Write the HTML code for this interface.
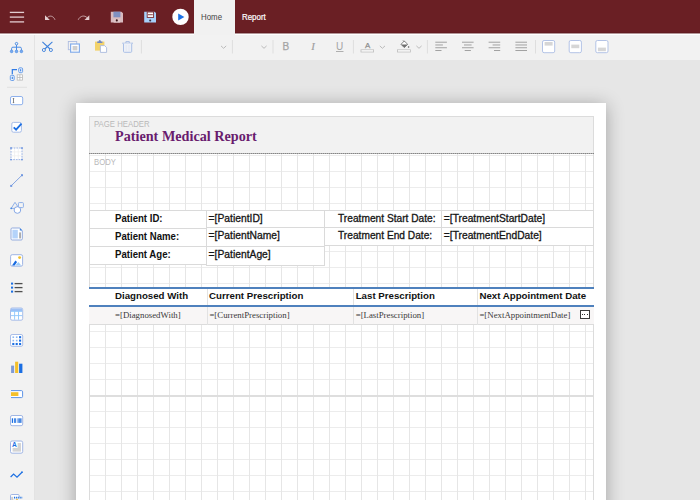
<!DOCTYPE html>
<html><head><meta charset="utf-8"><title>Report Designer</title>
<style>
*{box-sizing:border-box;margin:0;padding:0}
html,body{width:700px;height:500px;overflow:hidden;background:#e6e6e6;font-family:"Liberation Sans",sans-serif}
.abs{position:absolute}
#top{position:absolute;left:0;top:0;width:700px;height:34px;background:linear-gradient(to bottom,#6a1f24 0,#6a1f24 32px,#621b20 32px,#621b20 33px,#b39597 33px,#b39597 34px)}
#tabhome{position:absolute;left:194px;top:0;width:41px;height:35px;background:#f1f1f1;z-index:2}
#tool{position:absolute;left:0;top:34px;width:700px;height:26px;background:#f2f2f2;border-top:1px solid #fff}
#side{position:absolute;left:0;top:35px;width:35px;height:465px;background:#f2f2f2;border-right:1px solid #e3e3e3}
#page{position:absolute;left:76px;top:103px;width:530px;height:420px;background:#fff;box-shadow:0 2px 17px rgba(0,0,0,.3)}
#hdr{position:absolute;left:89px;top:116px;width:505px;height:38px;background:#f2f2f2;border:1px solid #dcdcdc;border-bottom:0}
#dash{position:absolute;left:89px;top:153px;width:505px;height:1px;background:repeating-linear-gradient(to right,#858585 0,#858585 1px,#b4b4b4 1px,#b4b4b4 2px)}
#body{position:absolute;left:89px;top:154px;width:505px;height:360px;border-left:1px solid #dcdcdc;border-right:1px solid #dcdcdc;
background-image:linear-gradient(to right,#e6e6e6 1px,transparent 1px),linear-gradient(to bottom,#ececec 1px,transparent 1px);background-size:16px 16px;background-position:15px 1px}
.tb{position:absolute;background:#fff;border:1px solid #dadada}
.t{position:absolute;line-height:1;white-space:nowrap}
.k{-webkit-text-stroke:0.3px #222}
svg{position:absolute;overflow:visible}

</style></head><body>
<div id="top"></div>
<div id="tabhome"></div>
<div id="tool"></div>
<div id="side"></div>
<div id="page"></div>
<div id="hdr"></div>
<div id="body"></div>
<div id="dash"></div>
<div class="t" style="left:201px;top:13px;font-size:9px;color:#444;transform-origin:0 0;transform:scaleX(0.875);z-index:3;">Home</div>
<div class="t" style="left:242.2px;top:13px;font-size:9px;color:#fff;transform-origin:0 0;transform:scaleX(0.88);-webkit-text-stroke:0.2px #fff;">Report</div>
<div class="t" style="left:94.4px;top:119px;font-size:9.4px;color:#b9b9b9;transform-origin:0 0;transform:scaleX(0.83);">PAGE HEADER</div>
<div class="t" style="left:94.4px;top:158px;font-size:9.2px;color:#b9b9b9;transform-origin:0 0;transform:scaleX(0.84);">BODY</div>
<div class="t" style="left:115px;top:129px;font-size:14.2px;color:#691c6e;font-weight:bold;font-family:'Liberation Serif',serif;">Patient Medical Report</div>
<div class="tb" style="left:89px;top:210px;width:118.0px;height:19.0px;"></div>
<div class="tb" style="left:89px;top:228px;width:118.0px;height:19.0px;"></div>
<div class="tb" style="left:89px;top:246px;width:118.0px;height:19.0px;"></div>
<div class="tb" style="left:206px;top:210px;width:119.0px;height:18.0px;"></div>
<div class="tb" style="left:206px;top:227px;width:119.0px;height:20.0px;"></div>
<div class="tb" style="left:206px;top:246px;width:119.0px;height:20.0px;"></div>
<div class="tb" style="left:324px;top:210px;width:118.0px;height:18.0px;"></div>
<div class="tb" style="left:324px;top:227px;width:118.0px;height:19.0px;"></div>
<div class="tb" style="left:441px;top:210px;width:153.0px;height:18.0px;"></div>
<div class="tb" style="left:441px;top:227px;width:153.0px;height:19.0px;"></div>
<div class="t" style="left:115px;top:214px;font-size:10.4px;color:#111;font-weight:bold;transform-origin:0 0;transform:scaleX(0.925);">Patient ID:</div>
<div class="t" style="left:115px;top:232px;font-size:10.4px;color:#111;font-weight:bold;transform-origin:0 0;transform:scaleX(0.925);">Patient Name:</div>
<div class="t" style="left:115px;top:250px;font-size:10.4px;color:#111;font-weight:bold;transform-origin:0 0;transform:scaleX(0.925);">Patient Age:</div>
<div class="t" style="left:208.6px;top:214px;font-size:10.3px;color:#111;-webkit-text-stroke:0.3px #1a1a1a;">=[PatientID]</div>
<div class="t" style="left:208.6px;top:231px;font-size:10.3px;color:#111;-webkit-text-stroke:0.3px #1a1a1a;">=[PatientName]</div>
<div class="t" style="left:208.6px;top:250px;font-size:10.3px;color:#111;-webkit-text-stroke:0.3px #1a1a1a;">=[PatientAge]</div>
<div class="t" style="left:338px;top:214px;font-size:10.2px;color:#111;-webkit-text-stroke:0.3px #1a1a1a;">Treatment Start Date:</div>
<div class="t" style="left:338px;top:231px;font-size:10.2px;color:#111;-webkit-text-stroke:0.3px #1a1a1a;">Treatment End Date:</div>
<div class="t" style="left:443.8px;top:214px;font-size:10.25px;color:#111;-webkit-text-stroke:0.3px #1a1a1a;">=[TreatmentStartDate]</div>
<div class="t" style="left:443.8px;top:231px;font-size:10.25px;color:#111;-webkit-text-stroke:0.3px #1a1a1a;">=[TreatmentEndDate]</div>
<div class="abs" style="left:89px;top:287px;width:505px;height:38px;background:#fff"></div>
<div class="abs" style="left:89px;top:306px;width:505px;height:19px;background:#f8f6f6;border-bottom:1px solid #dcdcdc"></div>
<div class="abs" style="left:206.5px;top:288px;width:1px;height:37px;background:#e2e2e2"></div>
<div class="abs" style="left:352.5px;top:288px;width:1px;height:37px;background:#e2e2e2"></div>
<div class="abs" style="left:476.5px;top:288px;width:1px;height:37px;background:#e2e2e2"></div>
<div class="abs" style="left:89px;top:287px;width:505px;height:1.8px;background:#4f81bd"></div>
<div class="abs" style="left:89px;top:305px;width:505px;height:1.8px;background:#4f81bd"></div>
<div class="t" style="left:115px;top:291px;font-size:9.7px;color:#111;font-weight:bold;">Diagnosed With</div>
<div class="t" style="left:209.1px;top:291px;font-size:9.7px;color:#111;font-weight:bold;">Current Prescription</div>
<div class="t" style="left:355.7px;top:291px;font-size:9.7px;color:#111;font-weight:bold;">Last Prescription</div>
<div class="t" style="left:479.4px;top:291px;font-size:9.7px;color:#111;font-weight:bold;">Next Appointment Date</div>
<div class="t" style="left:115px;top:311px;font-size:8.8px;color:#3a3a3a;font-family:'Liberation Serif',serif;">=[DiagnosedWith]</div>
<div class="t" style="left:209.4px;top:311px;font-size:8.8px;color:#3a3a3a;font-family:'Liberation Serif',serif;">=[CurrentPrescription]</div>
<div class="t" style="left:355.7px;top:311px;font-size:8.8px;color:#3a3a3a;font-family:'Liberation Serif',serif;">=[LastPrescription]</div>
<div class="t" style="left:479.4px;top:311px;font-size:8.8px;color:#3a3a3a;font-family:'Liberation Serif',serif;">=[NextAppointmentDate]</div>
<div class="abs" style="left:580px;top:309.7px;width:9.8px;height:9.1px;border:1px solid #3c3c3c;background:#fff"></div>
<div class="abs" style="left:582.0px;top:313.7px;width:1.2px;height:1.2px;background:#333"></div>
<div class="abs" style="left:584.3px;top:313.7px;width:1.2px;height:1.2px;background:#333"></div>
<div class="abs" style="left:586.6px;top:313.7px;width:1.2px;height:1.2px;background:#333"></div>
<div class="abs" style="left:90px;top:395.4px;width:503px;height:1.5px;background:#dedede"></div>
<svg width="700" height="500" viewBox="0 0 700 500" style="left:0;top:0"><rect x="9.8" y="11.75" width="14.3" height="1.3" fill="#e3cdd0"/><rect x="9.8" y="16.450000000000003" width="14.3" height="1.3" fill="#e3cdd0"/><rect x="9.8" y="21.25" width="14.3" height="1.3" fill="#e3cdd0"/><path d="M45 15.2 L45 20 L49.8 20 Z" fill="#e3cdd0"/><path d="M47.3 17.6 C49.5 15.2 53.3 15.6 55 19.8" fill="none" stroke="#e3cdd0" stroke-width="0.95" opacity="0.75"/><path d="M89.3 15.2 L89.3 20 L84.5 20 Z" fill="#e3cdd0"/><path d="M87 17.6 C84.8 15.2 80.2 15.4 78.2 19.8" fill="none" stroke="#e3cdd0" stroke-width="0.95" opacity="0.75"/><path d="M110.8 11.7 H121.4 L123 13.3 V22.6 H110.8 Z" fill="#d8babf"/><rect x="113.4" y="11.7" width="7" height="5.6" fill="#7f90c2"/><rect x="113.6" y="18.8" width="6.6" height="3.8" fill="#dec5c8"/><circle cx="116.8" cy="20.4" r="1.05" fill="#3a1518"/><path d="M144.2 11.7 H154.6 L156 13.1 V22.6 H144.2 Z" fill="#a6d0fa"/><rect x="147.2" y="12" width="6.4" height="5.4" fill="#fff" stroke="#7a2a30" stroke-width="0.9"/><rect x="148" y="14.3" width="4.8" height="0.9" fill="#7a2a30"/><circle cx="150.2" cy="20.5" r="1.05" fill="#3a3040"/><circle cx="180.5" cy="16.9" r="8.2" fill="#fff"/><path d="M178.2 13.5 L184.4 17 L178.2 20.5 Z" fill="#1b72e6"/><path d="M42.4 41.8 L50 49 M52.4 41.8 L44.8 49" stroke="#3f82dc" stroke-width="1.1" fill="none"/><circle cx="43.9" cy="50" r="1.55" fill="none" stroke="#3f82dc" stroke-width="0.9"/><circle cx="50.9" cy="50" r="1.55" fill="none" stroke="#3f82dc" stroke-width="0.9"/><rect x="68.3" y="41.5" width="8.4" height="8.2" fill="none" stroke="#aebde0" stroke-width="0.9"/><rect x="70.6" y="44" width="8.8" height="8.2" fill="#fff" stroke="#86aeea" stroke-width="1.2"/><rect x="72.6" y="46" width="4.8" height="4.4" fill="#cfcfcf"/><rect x="95" y="41.6" width="9.4" height="9" fill="#f3d36b"/><path d="M97.2 43 V41.6 H98.6 Q98.6 40 99.8 40 Q101 40 101 41.6 H102.4 V43 Z" fill="#6f88c4"/><path d="M100.4 45.6 H104.6 L106.6 47.6 V52.4 H100.4 Z" fill="#fff" stroke="#a9b9dc" stroke-width="0.9"/><path d="M122.2 43.2 H133 M125.9 43 V41.6 H129.3 V43" fill="none" stroke="#aabfe6" stroke-width="1"/><path d="M123.5 43.6 V51.4 Q123.5 52.3 124.4 52.3 H130.8 Q131.7 52.3 131.7 51.4 V43.6" fill="#eef1f7" stroke="#aabfe6" stroke-width="1"/><path d="M126.2 45 V51 M129 45 V51" stroke="#dfe6f3" stroke-width="0.8"/><rect x="140.9" y="40" width="1" height="13.5" fill="#dedede"/><rect x="231.9" y="40" width="1" height="13.5" fill="#dedede"/><rect x="272.5" y="40" width="1" height="13.5" fill="#dedede"/><rect x="352.9" y="40" width="1" height="13.5" fill="#dedede"/><rect x="426.9" y="40" width="1" height="13.5" fill="#dedede"/><rect x="535.0" y="40" width="1" height="13.5" fill="#dedede"/><path d="M221.0 45.9 L223.6 48.3 L226.2 45.9" fill="none" stroke="#b4b4b4" stroke-width="0.9"/><path d="M261.4 45.9 L264 48.3 L266.6 45.9" fill="none" stroke="#b4b4b4" stroke-width="0.9"/><path d="M379.79999999999995 45.9 L382.4 48.3 L385.0 45.9" fill="none" stroke="#b4b4b4" stroke-width="0.9"/><path d="M416.4 45.9 L419 48.3 L421.6 45.9" fill="none" stroke="#b4b4b4" stroke-width="0.9"/><text x="282.6" y="50.3" font-family="Liberation Sans, sans-serif" font-size="10" fill="#a4a4a4" stroke="#a4a4a4" stroke-width="0.25">B</text><text x="311.2" y="50.3" font-family="Liberation Serif, serif" font-style="italic" font-size="10.8" fill="#a0a0a0" stroke="#a0a0a0" stroke-width="0.2">I</text><text x="336" y="50.3" font-family="Liberation Sans, sans-serif" font-size="10" fill="#a4a4a4">U</text><rect x="336" y="51.1" width="7.5" height="0.9" fill="#a8a8a8"/><text x="364.9" y="47.5" font-family="Liberation Sans, sans-serif" font-size="7.9" fill="#8c8c8c" stroke="#8c8c8c" stroke-width="0.25">A</text><rect x="361" y="49.8" width="12.6" height="2.2" fill="#fff" stroke="#bdbdbd" stroke-width="0.8"/><path d="M401 44.3 L404.3 41 L407.7 44.3 L404.3 47.6 Z" fill="#fff" stroke="#777" stroke-width="0.9"/><path d="M401 44.4 H407.6 L404.3 47.6 Z" fill="#6e6e6e"/><path d="M403 40.4 L404.6 42" stroke="#777" stroke-width="0.9"/><circle cx="408.6" cy="47" r="0.8" fill="#555"/><rect x="397.5" y="49.8" width="13" height="2.2" fill="#fff" stroke="#bdbdbd" stroke-width="0.8"/><rect x="435.3" y="41.70" width="11.6" height="1" fill="#a2a2a2"/><rect x="435.3" y="44.47" width="7.6" height="1" fill="#a2a2a2"/><rect x="435.3" y="47.24" width="11.6" height="1" fill="#a2a2a2"/><rect x="435.3" y="50.01" width="6.2" height="1" fill="#a2a2a2"/><rect x="462.0" y="41.70" width="11.6" height="1" fill="#a2a2a2"/><rect x="464.0" y="44.47" width="7.6" height="1" fill="#a2a2a2"/><rect x="462.0" y="47.24" width="11.6" height="1" fill="#a2a2a2"/><rect x="464.7" y="50.01" width="6.2" height="1" fill="#a2a2a2"/><rect x="488.6" y="41.70" width="11.6" height="1" fill="#a2a2a2"/><rect x="492.6" y="44.47" width="7.6" height="1" fill="#a2a2a2"/><rect x="488.6" y="47.24" width="11.6" height="1" fill="#a2a2a2"/><rect x="494.0" y="50.01" width="6.2" height="1" fill="#a2a2a2"/><rect x="515.4" y="41.70" width="11.6" height="1" fill="#a2a2a2"/><rect x="515.4" y="44.47" width="11.6" height="1" fill="#a2a2a2"/><rect x="515.4" y="47.24" width="11.6" height="1" fill="#a2a2a2"/><rect x="515.4" y="50.01" width="11.6" height="1" fill="#a2a2a2"/><rect x="542.5" y="40.5" width="12.2" height="12.2" rx="1.6" fill="#fff" stroke="#b3c3e6" stroke-width="1"/><rect x="544.6" y="42" width="8" height="3.6" fill="#d6d6d6"/><rect x="569.2" y="40.5" width="12.2" height="12.2" rx="1.6" fill="#fff" stroke="#b3c3e6" stroke-width="1"/><rect x="571.3000000000001" y="44.6" width="8" height="3.6" fill="#d6d6d6"/><rect x="595.8" y="40.5" width="12.2" height="12.2" rx="1.6" fill="#fff" stroke="#b3c3e6" stroke-width="1"/><rect x="597.9" y="47.6" width="8" height="3.6" fill="#d6d6d6"/><path d="M16.5 45 V50 M11.6 50 V48.5 Q11.6 47.2 12.9 47.2 H20.1 Q21.4 47.2 21.4 48.5 V50" fill="none" stroke="#4a8ce4" stroke-width="1"/><circle cx="16.5" cy="43.7" r="1.25" fill="#f2f2f2" stroke="#3d83e0" stroke-width="0.9"/><circle cx="11.6" cy="51.4" r="1.3" fill="#7aaaee" stroke="#4a8ce4" stroke-width="0.7"/><circle cx="16.5" cy="51.4" r="1.3" fill="#7aaaee" stroke="#4a8ce4" stroke-width="0.7"/><circle cx="21.4" cy="51.4" r="1.3" fill="#7aaaee" stroke="#4a8ce4" stroke-width="0.7"/><rect x="18.7" y="67.8" width="3.9" height="4.9" rx="1.2" fill="#e8f0fc" stroke="#4d8de6" stroke-width="0.8"/><rect x="20.25" y="69.2" width="0.9" height="2.1" fill="#1b6fe3"/><rect x="10.3" y="75.3" width="3.9" height="5.2" rx="1.2" fill="#e8f0fc" stroke="#4d8de6" stroke-width="0.8"/><rect x="11.8" y="76.8" width="0.9" height="2.2" fill="#1b6fe3"/><path d="M12.3 74.2 V69.7 H17" fill="none" stroke="#2f7be6" stroke-width="1.2"/><rect x="17.2" y="74.8" width="5.3" height="5.3" fill="#fff" stroke="#b8b8b8" stroke-width="0.8"/><path d="M19.85 74.8 V80.1 M17.2 77.45 H22.5" stroke="#b8b8b8" stroke-width="0.8"/><rect x="7" y="86.8" width="20" height="1" fill="#e0e0e0"/><rect x="10.5" y="96.5" width="12.2" height="8.2" rx="1.6" fill="#fff" stroke="#8db0ec" stroke-width="1"/><path d="M13.5 98.6 V102.6 M12.8 98.6 H14.2 M12.8 102.6 H14.2" stroke="#555" stroke-width="0.7"/><rect x="11.8" y="122.4" width="9.6" height="9.8" rx="1.6" fill="#fff" stroke="#a6bce8" stroke-width="1"/><path d="M13.7 127.3 L16.1 129.7 L21.5 123.7" fill="none" stroke="#1b6fe3" stroke-width="1.8"/><rect x="11" y="148" width="11" height="11.6" fill="#fff"/><path d="M14.6 148 V159.6 M18.3 148 V159.6 M11 151.9 H22 M11 155.8 H22" stroke="#ececec" stroke-width="0.7"/><rect x="11" y="148" width="11" height="11.6" fill="none" stroke="#86a4e2" stroke-width="0.8" stroke-dasharray="1.7 1"/><circle cx="11" cy="148" r="0.95" fill="#6f97e0"/><circle cx="22" cy="148" r="0.95" fill="#6f97e0"/><circle cx="11" cy="159.6" r="0.95" fill="#6f97e0"/><circle cx="22" cy="159.6" r="0.95" fill="#6f97e0"/><path d="M11.2 185.8 L22 175.2" stroke="#86a6e2" stroke-width="1"/><rect x="10.2" y="184.9" width="2" height="2" fill="#6f97e0"/><rect x="21" y="174.2" width="2" height="2" fill="#6f97e0"/><path d="M11.2 208.4 L15 202.3 L18.9 208.4 Z" fill="none" stroke="#8fb0e8" stroke-width="1"/><circle cx="11.2" cy="208.3" r="0.9" fill="#4a8ce4"/><rect x="18.4" y="202.6" width="5" height="5" rx="0.8" fill="#f4f4f4" stroke="#8fb0e8" stroke-width="1"/><circle cx="17.4" cy="210" r="3.3" fill="#fff" stroke="#86a8e6" stroke-width="1"/><path d="M12.2 228 H19.6 L22.3 230.7 V238.8 Q22.3 240 21.1 240 H12.2 Q11 240 11 238.8 V229.2 Q11 228 12.2 228 Z" fill="#fff" stroke="#93abde" stroke-width="1"/><rect x="12.4" y="229.8" width="5.4" height="8.6" fill="#b4d3fa"/><rect x="19.3" y="232.4" width="1.5" height="6" fill="#999"/><path d="M19.8 227.9 L22.4 230.5 L19.8 230.5 Z" fill="#3d83e0"/><rect x="10.6" y="254.7" width="12" height="11.5" rx="1.6" fill="#fff" stroke="#9fb5e4" stroke-width="1"/><circle cx="19.6" cy="257.6" r="1.45" fill="#f2c029"/><path d="M15.4 265.5 L18.4 262 L21.2 265.5 Z" fill="#9ccbf8"/><path d="M12 265.5 L15.4 260.5 L17.1 262.1 L14.6 265.5 Z" fill="#1669e0"/><rect x="11" y="282.6" width="2.1" height="2" fill="#1b6fe3"/><rect x="14.6" y="282.95000000000005" width="7.9" height="1.3" fill="#505050"/><rect x="11" y="286.6" width="2.1" height="2" fill="#1b6fe3"/><rect x="14.6" y="286.95000000000005" width="7.9" height="1.3" fill="#505050"/><rect x="11" y="290.6" width="2.1" height="2" fill="#1b6fe3"/><rect x="14.6" y="290.95000000000005" width="7.9" height="1.3" fill="#505050"/><rect x="10.5" y="308" width="12.2" height="12.2" rx="1.6" fill="#fff" stroke="#a8bde8" stroke-width="1"/><rect x="11" y="308.5" width="11.2" height="2.6" fill="#9dc0f5"/><path d="M14.6 311.3 V319.7 M18.5 311.3 V319.7 M11 311.4 H22.2 M11 315.6 H22.2" stroke="#8ec6fc" stroke-width="0.9"/><rect x="10.5" y="334.5" width="12.2" height="11.8" rx="1.6" fill="#fff" stroke="#a8bde8" stroke-width="1"/><rect x="12.50" y="336.40" width="1.6" height="1.6" fill="#8db8f2"/><rect x="12.50" y="339.80" width="1.6" height="1.6" fill="#8db8f2"/><rect x="12.25" y="342.95" width="2.1" height="2.1" fill="#1b6fe3"/><rect x="15.90" y="336.40" width="1.6" height="1.6" fill="#8db8f2"/><rect x="15.90" y="339.80" width="1.6" height="1.6" fill="#8db8f2"/><rect x="15.65" y="342.95" width="2.1" height="2.1" fill="#1b6fe3"/><rect x="19.05" y="336.15" width="2.1" height="2.1" fill="#1b6fe3"/><rect x="19.05" y="339.55" width="2.1" height="2.1" fill="#1b6fe3"/><rect x="19.05" y="342.95" width="2.1" height="2.1" fill="#1b6fe3"/><rect x="11.1" y="365.6" width="3" height="7.4" fill="#7f9bd6"/><rect x="15.1" y="361.7" width="3.1" height="11.3" fill="#f4c02c"/><rect x="19.1" y="363.7" width="3.3" height="9.3" fill="#1b6fe3"/><path d="M11 390.6 H21.4 Q22.6 390.6 22.6 391.8 V396.4 Q22.6 397.6 21.4 397.6 H11" fill="#fff" stroke="#5d93e6" stroke-width="1"/><rect x="11" y="392.2" width="7.4" height="3.8" fill="#f4c02c"/><rect x="10.5" y="415.5" width="12.2" height="10.2" rx="1.6" fill="#fff" stroke="#a0b6e4" stroke-width="1"/><rect x="11.8" y="418.3" width="1.3" height="4.6" fill="#1b6fe3"/><rect x="14.2" y="418.3" width="1.6" height="4.6" fill="#1b6fe3"/><rect x="16.8" y="418.3" width="0.8" height="4.6" fill="#5d93e6"/><rect x="18.2" y="418.3" width="3.4" height="4.6" fill="#4a8ae4"/><rect x="10.5" y="441" width="12.2" height="12.2" rx="1.6" fill="#fff" stroke="#a0b6e4" stroke-width="1"/><rect x="12.6" y="443" width="8.4" height="8.6" fill="#d4d4d4"/><rect x="11.4" y="441.9" width="6.2" height="6" fill="#fff"/><text x="12.1" y="447.4" font-family="Liberation Sans, sans-serif" font-weight="bold" font-size="6.6" fill="#1b6fe3">A</text><path d="M10.6 477 L13.6 474.1 L17 477.2 L22 472.3" fill="none" stroke="#1b6fe3" stroke-width="1.2"/><circle cx="22" cy="472.2" r="0.9" fill="#1b6fe3"/><path d="M10.5 500 V495.7 Q10.5 494.5 11.7 494.5 H18 Q19.2 494.5 19.2 495.7 V497" fill="#fff" stroke="#a0b6e4" stroke-width="1"/><rect x="11.2" y="496.8" width="2" height="3.2" fill="#cfcfcf"/><path d="M14 497.6 H22.6" stroke="#1b6fe3" stroke-width="1.6" stroke-dasharray="1.2 0.9"/><circle cx="17" cy="499.6" r="0.8" fill="#f4b824"/></svg>
</body></html>
